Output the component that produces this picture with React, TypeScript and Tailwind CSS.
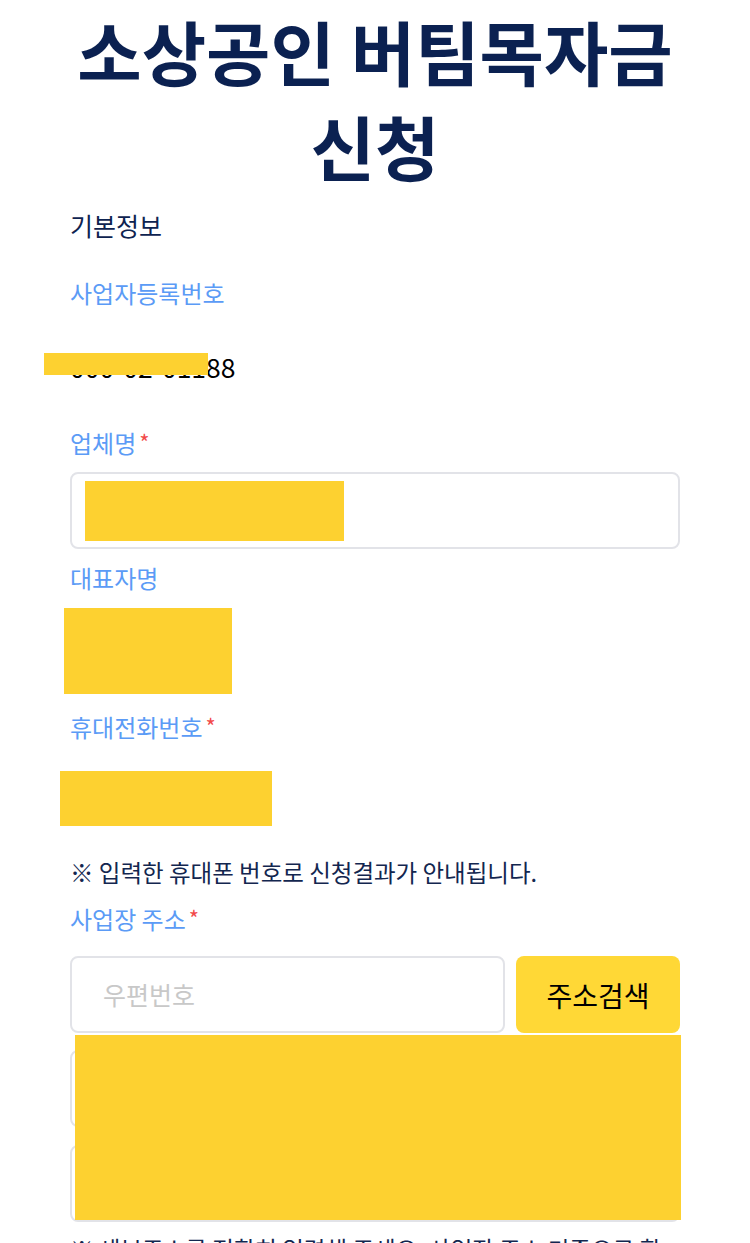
const font = { fontFamily: '"Noto Sans CJK KR", "Noto Sans", sans-serif' };

function Label({ text, required }: { text: string; required?: boolean }) {
  return (
    <div className="text-[24px] leading-[34px] text-[#5b9bf6]">
      {text}
      {required && <span className="ml-[3px] align-top text-[22px] leading-[30px] text-[#f24a4a]">*</span>}
    </div>
  );
}

export default function App() {
  return (
    <div className="relative w-[750px] bg-white overflow-hidden" style={font}>
      <h1 className="pt-[3px] text-center text-[70px] leading-[95px] font-bold text-[#0b2151]">
        <span className="block">소상공인 버팀목자금</span>
        <span className="block">신청</span>
      </h1>

      <div className="px-[70px]">
        <div className="mt-[14px] text-[25px] leading-[36px] text-[#0e2350]">기본정보</div>

        <div className="mt-[33px]">
          <Label text="사업자등록번호" />
        </div>
        <div className="relative mt-[39px] text-[26.5px] leading-[36px] text-black">
          000-02-01188
          <div className="absolute left-[-26px] top-[4px] h-[22px] w-[164px] bg-[#fdd130]" />
        </div>

        <div className="mt-[41px]">
          <Label text="업체명" required />
        </div>
        <div className="relative mt-[12px] h-[77px] rounded-[8px] border-2 border-[#e2e3e8] bg-white">
          <div className="absolute left-[13px] top-[7px] h-[60px] w-[259px] bg-[#fdd130]" />
        </div>

        <div className="mt-[12px]">
          <Label text="대표자명" />
        </div>
        <div className="mt-[13px] -ml-[6px] h-[86px] w-[168px] bg-[#fdd130]" />

        <div className="mt-[16px]">
          <Label text="휴대전화번호" required />
        </div>
        <div className="mt-[27px] -ml-[10px] h-[55px] w-[212px] bg-[#fdd130]" />

        <div className="mt-[29px] text-[23.5px] leading-[34px] text-[#13264f]">
          ※ 입력한 휴대폰 번호로 신청결과가 안내됩니다.
        </div>

        <div className="mt-[13px]">
          <Label text="사업장 주소" required />
        </div>

        <div className="relative">
          <div className="mt-[20px] flex gap-[11px]">
            <div className="flex h-[77px] flex-1 items-center rounded-[8px] border-2 border-[#e2e3e8] px-[31px] text-[25px] text-[#c8c8c8]">
              우편번호
            </div>
            <button className="h-[77px] w-[164px] rounded-[8px] bg-[#ffd836] text-[28px] text-black">
              주소검색
            </button>
          </div>
          <div className="mt-[17px] h-[77px] rounded-[8px] border-2 border-[#e2e3e8]" />
          <div className="mt-[18px] h-[77px] rounded-[8px] border-2 border-[#e2e3e8]" />
          <div className="absolute left-[5px] top-[79px] h-[185px] w-[606px] bg-[#fdd130]" />
        </div>

        <div className="mt-[10px] text-[23.5px] leading-[34px] text-[#13264f]">
          ※ 세부주소를 정확히 입력해 주세요. 사업장 주소 기준으로 확인합니다.
        </div>
      </div>
    </div>
  );
}
